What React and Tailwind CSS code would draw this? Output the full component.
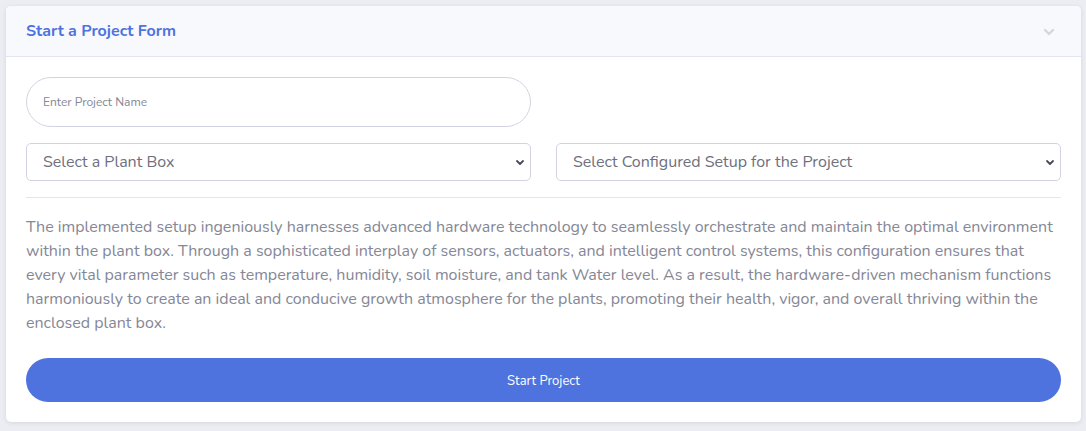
import React from "react";

export default function App() {
  return (
    <div className="min-h-[431px] w-[1086px] bg-[#ecedf2] pt-[6px] pl-[6px]" style={{ fontFamily: '"Nunito", "Lato", "Open Sans", sans-serif' }}>
      <div className="w-[1075px] rounded-[5px] bg-white shadow-[0_1px_4px_rgba(58,59,69,0.12)] overflow-hidden">
        <div className="flex h-[51px] items-center justify-between border-b border-[#e3e6f0] bg-[#f8f9fc] pl-[20px] pr-[26px]">
          <h6 className="text-[16px] font-bold text-[#4e73df]">Start a Project Form</h6>
          <svg width="12" height="10" viewBox="0 0 12 10" className="mt-[1px]">
            <path d="M2 3 L6 7 L10 3" fill="none" stroke="#d5d6de" strokeWidth="2.4" strokeLinecap="round" strokeLinejoin="round" />
          </svg>
        </div>
        <div className="px-[20px] pt-[20px] pb-[20px]">
          <div className="grid grid-cols-2 gap-x-[25px]">
            <input
              className="h-[50px] w-full rounded-full border border-[#d1d3e2] px-[16px] text-[12px] text-[#6e707e] placeholder-[#858796] outline-none"
              placeholder="Enter Project Name"
            />
            <div></div>
          </div>
          <div className="mt-[16px] grid grid-cols-2 gap-x-[25px]">
            <div className="relative flex h-[38px] items-center rounded-[5px] border border-[#d1d3e2] pl-[16px] text-[16px] text-[#6e707e]">
              Select a Plant Box
              <svg width="10" height="8" viewBox="0 0 10 8" className="absolute right-[5px] top-[15px]">
                <path d="M2 2 L5 5 L8 2" fill="none" stroke="#4a4b57" strokeWidth="1.8" strokeLinecap="round" strokeLinejoin="round" />
              </svg>
            </div>
            <div className="relative flex h-[38px] items-center rounded-[5px] border border-[#d1d3e2] pl-[16px] text-[16px] text-[#6e707e]">
              Select Configured Setup for the Project
              <svg width="10" height="8" viewBox="0 0 10 8" className="absolute right-[5px] top-[15px]">
                <path d="M2 2 L5 5 L8 2" fill="none" stroke="#4a4b57" strokeWidth="1.8" strokeLinecap="round" strokeLinejoin="round" />
              </svg>
            </div>
          </div>
          <div className="mt-[16px] border-t border-[#e3e6f0]"></div>
          <p className="mt-[17px] text-[16px] leading-[24px] text-[#858796]">
            The implemented setup ingeniously harnesses advanced hardware technology to seamlessly orchestrate and maintain the optimal environment within the plant box. Through a sophisticated interplay of sensors, actuators, and intelligent control systems, this configuration ensures that every vital parameter such as temperature, humidity, soil moisture, and tank Water level. As a result, the hardware-driven mechanism functions harmoniously to create an ideal and conducive growth atmosphere for the plants, promoting their health, vigor, and overall thriving within the enclosed plant box.
          </p>
          <button className="mt-[23px] flex h-[44px] w-full items-center justify-center rounded-full bg-[#4e73df] pt-[3px] text-[13px] text-white">
            Start Project
          </button>
        </div>
      </div>
    </div>
  );
}
